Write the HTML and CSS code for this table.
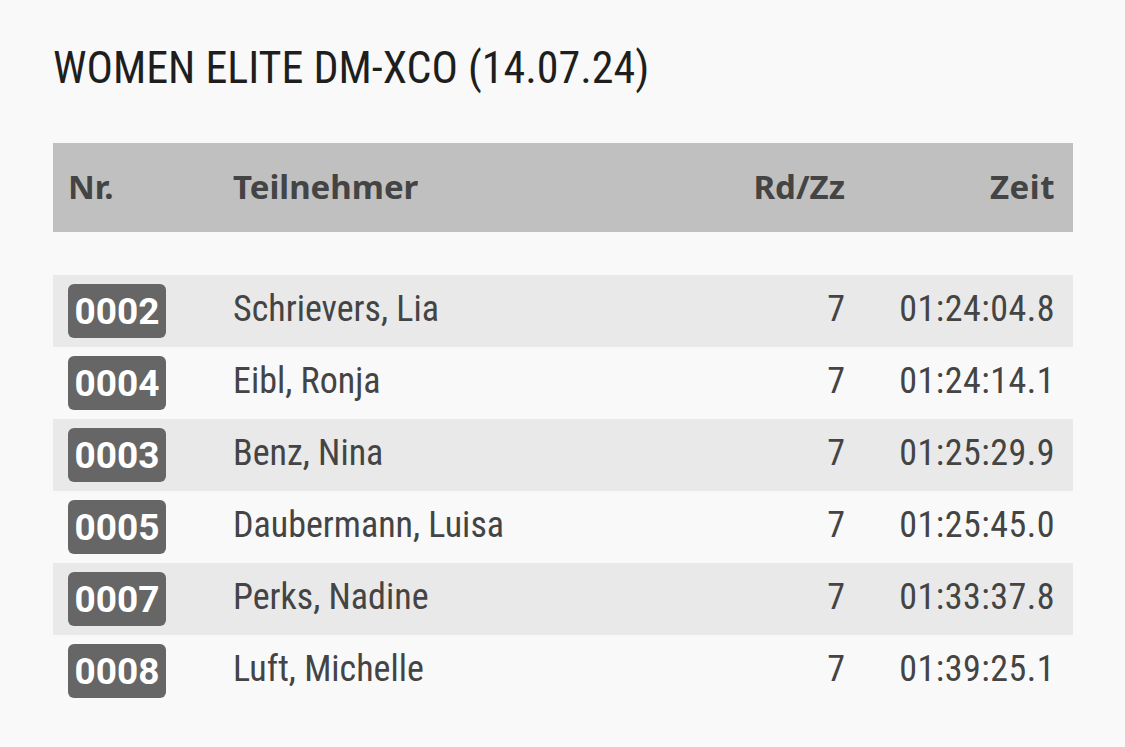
FILE: index.html
```html
<!DOCTYPE html>
<html lang="de">
<head>
<meta charset="utf-8">
<title>Women Elite DM-XCO</title>
<link rel="stylesheet" href="styles.css">
</head>
<body>
<main class="page">
  <h1 class="title">WOMEN ELITE DM-XCO (14.07.24)</h1>
  <div class="results">
    <div class="row head">
      <div class="c nr">Nr.</div>
      <div class="c name">Teilnehmer</div>
      <div class="c rd">Rd/Zz</div>
      <div class="c time">Zeit</div>
    </div>
    <div class="spacer"></div>
    <div class="row odd">
      <div class="c nr"><span class="badge">0002</span></div>
      <div class="c name">Schrievers, Lia</div>
      <div class="c rd">7</div>
      <div class="c time">01:24:04.8</div>
    </div>
    <div class="row">
      <div class="c nr"><span class="badge">0004</span></div>
      <div class="c name">Eibl, Ronja</div>
      <div class="c rd">7</div>
      <div class="c time">01:24:14.1</div>
    </div>
    <div class="row odd">
      <div class="c nr"><span class="badge">0003</span></div>
      <div class="c name">Benz, Nina</div>
      <div class="c rd">7</div>
      <div class="c time">01:25:29.9</div>
    </div>
    <div class="row">
      <div class="c nr"><span class="badge">0005</span></div>
      <div class="c name">Daubermann, Luisa</div>
      <div class="c rd">7</div>
      <div class="c time">01:25:45.0</div>
    </div>
    <div class="row odd">
      <div class="c nr"><span class="badge">0007</span></div>
      <div class="c name">Perks, Nadine</div>
      <div class="c rd">7</div>
      <div class="c time">01:33:37.8</div>
    </div>
    <div class="row">
      <div class="c nr"><span class="badge">0008</span></div>
      <div class="c name">Luft, Michelle</div>
      <div class="c rd">7</div>
      <div class="c time">01:39:25.1</div>
    </div>
  </div>
</main>
</body>
</html>
```

FILE: styles.css
```css
html, body {
  margin: 0;
  padding: 0;
  background: #f9f9f9;
}

.page {
  padding: 0 52px 0 53px;
  font-family: "Roboto Condensed", Roboto, "Liberation Sans", sans-serif;
  font-stretch: 75%;
  color: #444;
}

.title {
  margin: 0;
  padding-top: 42px;
  height: 143px;
  box-sizing: border-box;
  font-size: 44px;
  line-height: 52px;
  font-weight: 400;
  color: #1e1e1e;
}

.results {
  display: flex;
  flex-direction: column;
}

.row {
  display: grid;
  grid-template-columns: 165px 1fr 150px 213px;
  align-items: center;
  height: 72px;
  font-size: 36px;
}

.row.odd {
  background: #e9e9e9;
}

.row .c.name,
.row .c.rd,
.row .c.time {
  padding-bottom: 4px;
}

.row.head {
  height: 89px;
  background: #c0c0c0;
  font-family: "Noto Sans", "Open Sans", sans-serif;
  font-stretch: normal;
  font-weight: 700;
  font-size: 33px;
  color: #444;
}

.row.head .c {
  padding-bottom: 2px;
}

.spacer {
  height: 43px;
}

.c.nr,
.c.name {
  padding-left: 15px;
}

.c.rd {
  text-align: right;
  padding-right: 15px;
}

.c.time {
  text-align: right;
  padding-right: 18px;
  letter-spacing: 0.5px;
}

.badge {
  display: inline-flex;
  align-items: center;
  justify-content: center;
  width: 98px;
  height: 54px;
  border-radius: 6px;
  background: #666;
  color: #fff;
  font-family: Roboto, sans-serif;
  font-stretch: normal;
  font-weight: 700;
  font-size: 37px;
}
```
